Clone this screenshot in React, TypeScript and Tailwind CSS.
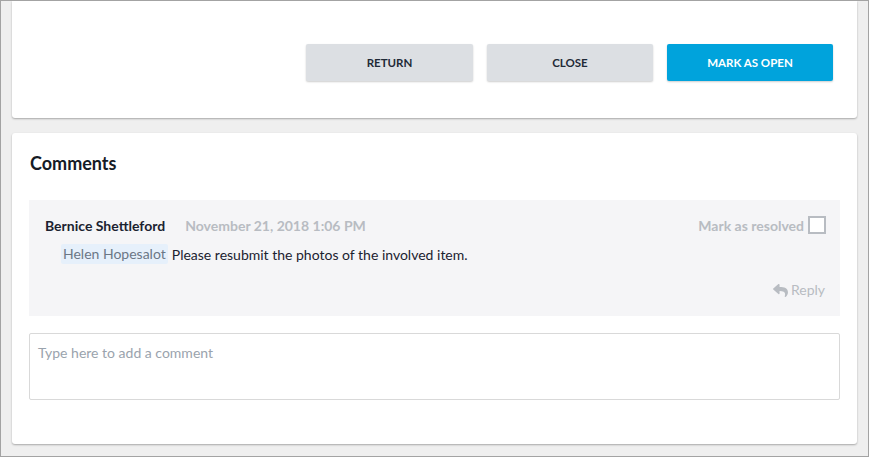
import React from "react";

export default function App() {
  return (
    <div
      className="w-[869px] h-[457px] bg-[#efefef] border border-[#a3a3a3] overflow-hidden flex flex-col px-[11px]"
      style={{ fontFamily: "Lato, 'Open Sans', sans-serif" }}
    >
      <div className="h-[117px] shrink-0 bg-white rounded-b-[3px] shadow-[0_1px_2px_rgba(0,0,0,0.3)] flex justify-end items-start pt-[43px] pr-[24px] gap-[14px]">
        <button className="w-[167px] h-[37px] bg-[#dcdfe3] rounded-[2px] shadow-[0_1px_2px_rgba(0,0,0,0.2)] text-[11.5px] leading-[36px] font-bold text-[#1f2a37]">
          RETURN
        </button>
        <button className="w-[166px] h-[37px] bg-[#dcdfe3] rounded-[2px] shadow-[0_1px_2px_rgba(0,0,0,0.2)] text-[11.5px] leading-[36px] font-bold text-[#1f2a37]">
          CLOSE
        </button>
        <button className="w-[166px] h-[37px] bg-[#00a3dc] rounded-[2px] shadow-[0_1px_2px_rgba(0,0,0,0.2)] text-[11.5px] leading-[36px] font-bold text-white">
          MARK AS OPEN
        </button>
      </div>
      <div className="mt-[15px] h-[311px] shrink-0 bg-white rounded-[3px] shadow-[0_1px_2px_rgba(0,0,0,0.3)] px-[17px] pt-[18px] flex flex-col">
        <div className="text-[18px] font-bold text-[#151b26] leading-[24px] pl-[1px]">Comments</div>
        <div className="mt-[25px] h-[116px] bg-[#f5f5f7] pl-[16px] pr-[14px] pt-[15px] flex flex-col">
          <div className="flex items-center h-[20px]">
            <span className="text-[14px] font-bold text-[#1b2230]">Bernice Shettleford</span>
            <span className="ml-[20px] text-[14px] font-bold text-[#b8bcc2]">November 21, 2018 1:06 PM</span>
            <span className="ml-auto text-[14px] font-bold text-[#b8bcc2]">Mark as resolved</span>
            <span className="ml-[4px] w-[18px] h-[18px] border-2 border-[#b8bcc2] bg-white"></span>
          </div>
          <div className="mt-[9px] pl-[16px] flex items-center h-[20px] text-[14px]">
            <span className="bg-[#e6f0fb] text-[#6b7786] px-[2px] h-[20px] leading-[20px] rounded-[2px]">Helen Hopesalot</span>
            <span className="ml-[4px] text-[#1b2230]">Please resubmit the photos of the involved item.</span>
          </div>
          <div className="mt-[15px] flex justify-end items-center text-[14px] text-[#b8bcc2] gap-[3px] pr-[1px]">
            <svg width="15" height="14" viewBox="0 0 512 480" fill="#b8bcc2">
              <path d="M8.3 189.8L184.3 37.8C199.7 24.5 224 35.3 224 56v80.1C384.6 137.9 512 170.1 512 322.3c0 61.4-39.6 122.3-83.3 154.1-13.7 9.9-33.1-2.5-28.1-18.6 45.3-144.7-21.5-183.1-176.6-185.4V360c0 20.7-24.3 31.5-39.7 18.2l-176-152c-11.1-9.6-11.1-26.8 0-36.4z" />
            </svg>
            <span>Reply</span>
          </div>
        </div>
        <div className="mt-[17px] h-[67px] border border-[#d9d9d9] rounded-[2px] bg-white pl-[8px] pt-[9px] leading-[18px]">
          <span className="text-[14px] text-[#9aa3ad]">Type here to add a comment</span>
        </div>
      </div>
    </div>
  );
}
